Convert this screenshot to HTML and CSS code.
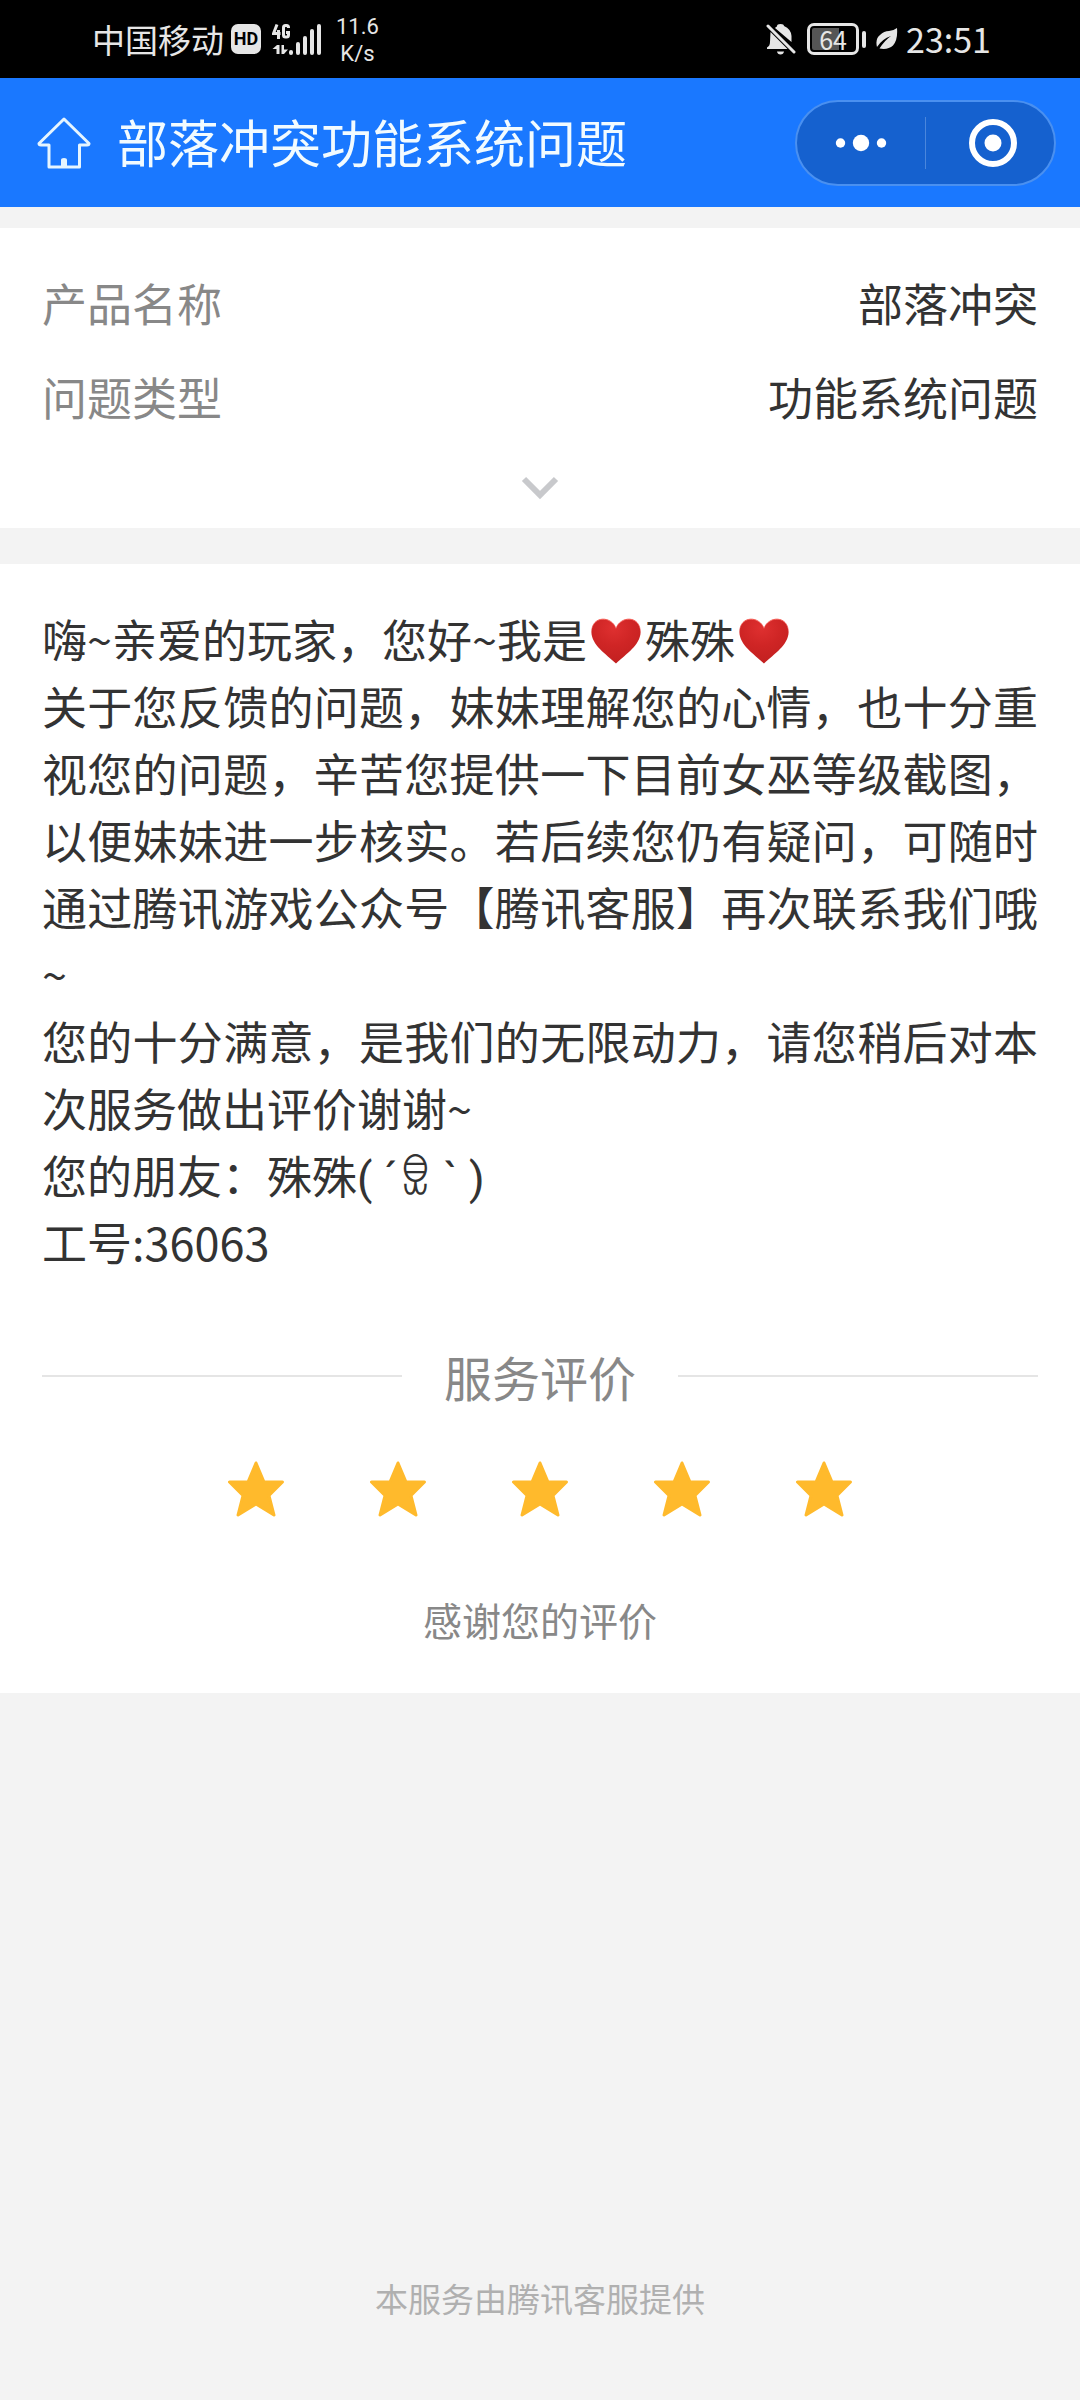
FILE: index.html
```html
<!DOCTYPE html>
<html lang="zh-CN">
<head>
<meta charset="utf-8">
<meta name="viewport" content="width=device-width, initial-scale=1">
<title>部落冲突功能系统问题</title>
<link rel="stylesheet" href="styles.css">
</head>
<body>
<div class="status">
  <div class="status-group">
    <span class="carrier">中国移动</span>
    <span class="hd">HD</span>
    <svg class="signal" width="50" height="32" viewBox="0 0 50 32" aria-hidden="true">
      <g fill="none" stroke="#e6e6e6" stroke-width="3">
        <path d="M5 1.500L1.500 10.500H8.500M6.500 7V16"/>
        <path d="M16.500 5V4.500Q16.500 2.500 14.500 2.500H13.500Q11.500 2.500 11.500 4.500V12Q11.500 14 13.500 14H14.500Q16.500 14 16.500 12V9.500H14"/>
      </g>
      <path fill="#e6e6e6" d="M4.500 31V26H0.500L5 22H7.500V31ZM9.500 22H12V26.500H16L12 31H9.500Z"/>
      <g fill="#e6e6e6">
        <rect x="17" y="27" width="4" height="5" rx="2"/><rect x="24" y="19" width="4" height="13" rx="2"/><rect x="31" y="13" width="4" height="19" rx="2"/><rect x="38" y="6" width="4" height="26" rx="2"/><rect x="45" y="1" width="4" height="31" rx="2"/>
      </g>
    </svg>
    <span class="speed">11.6<br>K/s</span>
  </div>
  <div class="status-group">
    <svg width="30" height="32" viewBox="0 0 30 32" aria-hidden="true">
      <path fill="#e6e6e6" d="M10 4Q11 4 11 3Q11 1 14.500 1T18 3Q25 6 25.500 13V19L9 5ZM4.500 9L21.500 26H1V24.500Q4 23 4 19ZM11 28.500H18Q17.500 31.500 14.500 31.500T11 28.500Z"/>
      <path fill="none" stroke="#e6e6e6" stroke-width="3" stroke-linecap="round" d="M2 3L28 29"/>
    </svg>
    <span class="battery"><span class="battery-level">64</span></span>
    <svg class="leaf" width="22" height="22" viewBox="0 0 22 22" aria-hidden="true">
      <path fill="#e6e6e6" d="M21 0Q22 12 17 17.500Q12 22 3.500 20.500Q9 12 15 8Q6 11 1 19Q-1 11 4 7Q8 3 13 3Q18 2.500 21 0Z"/>
    </svg>
    <time class="clock">23:51</time>
  </div>
</div>

<header class="header">
  <a class="home" href="#" aria-label="首页">
    <svg width="54" height="52" viewBox="0 0 54 52" aria-hidden="true">
      <path fill="none" stroke="#e6f5ff" stroke-width="3" stroke-linejoin="round" d="M27 2L52 26.500Q52 28 50 28H42.500V50H12V28H4Q2 28 2 26.500Z"/>
      <path fill="#e6f5ff" d="M24 51V43Q24 41 27 41T30 43V51Z"/>
    </svg>
  </a>
  <h1 class="title">部落冲突功能系统问题</h1>
  <div class="capsule">
    <button class="capsule-button" type="button" aria-label="更多">
      <svg width="52" height="18" viewBox="0 0 52 18" fill="#fff" aria-hidden="true"><circle cx="5.500" cy="9" r="4.700"/><circle cx="26" cy="9" r="8.200"/><circle cx="46.500" cy="9" r="4.700"/></svg>
    </button>
    <button class="capsule-button capsule-close" type="button" aria-label="关闭">
      <svg width="48" height="48" viewBox="0 0 48 48" aria-hidden="true"><circle cx="24" cy="24" r="21" fill="none" stroke="#fff" stroke-width="6"/><circle cx="24" cy="24" r="8.500" fill="#fff"/></svg>
    </button>
  </div>
</header>

<main class="content">
  <section class="card summary">
    <dl class="fields">
      <div class="field"><dt>产品名称</dt><dd>部落冲突</dd></div>
      <div class="field"><dt>问题类型</dt><dd>功能系统问题</dd></div>
    </dl>
    <button class="expand" type="button" aria-label="展开">
      <svg width="38" height="24" viewBox="0 0 38 24" aria-hidden="true"><path fill="none" stroke="#c8c9cc" stroke-width="6" d="M3 3L19 19L35 3"/></svg>
    </button>
  </section>

  <section class="card reply">
    <svg class="defs" width="0" height="0" aria-hidden="true">
      <defs>
        <radialGradient id="heart-fill" cx="0.450" cy="0.200" r="0.800"><stop offset="0" stop-color="#df3030"/><stop offset="0.500" stop-color="#cf2525"/><stop offset="1" stop-color="#c22020"/></radialGradient>
        <linearGradient id="heart-rim" x1="0" y1="0" x2="0" y2="1"><stop offset="0" stop-color="#f5524a"/><stop offset="0.400" stop-color="#e03030" stop-opacity="0"/></linearGradient>
        <symbol id="heart" viewBox="0 0 50 46">
          <path fill="url(#heart-fill)" stroke="url(#heart-rim)" d="M25 10.500C29 -2 49 -3 49.500 14C49.500 27 35 36 25 45.500C15 36 0.500 27 0.500 14C1 -3 21 -2 25 10.500Z"/>
        </symbol>
        <symbol id="star" viewBox="0 0 56 56">
          <path fill="#ffba2c" stroke="#ffba2c" stroke-width="3" stroke-linejoin="round" d="M28 2L36 21H54.500L41 34.500L46 54L28 43L10 54L15 34.500L1.500 21H20Z"/>
        </symbol>
      </defs>
    </svg>
    <div class="message">
      <p>嗨~亲爱的玩家，您好~我是<svg class="heart" role="img" aria-label="红心"><use href="#heart"/></svg>殊殊<svg class="heart" role="img" aria-label="红心"><use href="#heart"/></svg></p>
      <p>关于您反馈的问题，妹妹理解您的心情，也十分重视您的问题，辛苦您提供一下目前女巫等级截图，以便妹妹进一步核实。若后续您仍有疑问，可随时通过腾讯游戏公众号【腾讯客服】再次联系我们哦~</p>
      <p>您的十分满意，是我们的无限动力，请您稍后对本次服务做出评价谢谢~</p>
      <p>您的朋友：殊殊<span class="kaomoji">( ´ꁖ ` )</span></p>
      <p>工号:36063</p>
    </div>
    <h2 class="rating-title">服务评价</h2>
    <div class="stars" role="img" aria-label="五星">
      <svg class="star"><use href="#star"/></svg>
      <svg class="star"><use href="#star"/></svg>
      <svg class="star"><use href="#star"/></svg>
      <svg class="star"><use href="#star"/></svg>
      <svg class="star"><use href="#star"/></svg>
    </div>
    <p class="thanks">感谢您的评价</p>
  </section>
</main>

<footer class="footer">本服务由腾讯客服提供</footer>
</body>
</html>
```
FILE: styles.css
```css
* {
  box-sizing: border-box;
}

body,
h1,
h2,
p,
dl,
dd {
  margin: 0;
  font-weight: 400;
}

body {
  display: flex;
  flex-direction: column;
  min-height: 100vh;
  background: #f3f3f3;
  color: #333;
  font-family: "Noto Sans CJK SC", sans-serif;
  font-size: 45px;
  line-height: 67px;
  text-spacing-trim: space-all;
}

svg {
  display: block;
  flex: none;
}

button {
  display: flex;
  align-items: center;
  justify-content: center;
  padding: 0;
  border: 0;
  background: none;
}

.status {
  display: flex;
  justify-content: space-between;
  height: 78px;
  padding: 0 89px 0 92px;
  background: #000;
  color: #e6e6e6;
}

.status-group {
  display: flex;
  align-items: center;
}

.carrier {
  font-size: 33px;
  line-height: 72px;
}

.hd {
  width: 30px;
  margin: 0 11px 0 7px;
  border-radius: 7px;
  background: #e6e6e6;
  color: #000;
  font: 700 18px/30px Roboto, sans-serif;
  text-align: center;
}

.speed {
  padding-top: 2px;
  margin-left: 14px;
  font: 22px/27px Roboto, sans-serif;
  text-align: center;
}

.battery {
  display: flex;
  align-items: center;
  margin-left: 11px;
}

.battery::after {
  width: 4px;
  height: 17px;
  margin-left: 3px;
  border-radius: 2px;
  background: #e6e6e6;
  content: "";
}

.battery-level {
  width: 52px;
  height: 32px;
  padding: 2px;
  border: 3px solid #e6e6e6;
  border-radius: 7px;
  background: linear-gradient(90deg, #555 64%, #000 64%) content-box;
  font-size: 25px;
  line-height: 22px;
  text-align: center;
}

.leaf {
  margin: 0 8px 0 10px;
}

.clock {
  font-size: 34px;
  line-height: 72px;
}

.header {
  display: flex;
  align-items: center;
  height: 129px;
  padding: 0 24px 0 37px;
  background: #1a78ff;
}

.title {
  flex: 1;
  padding-bottom: 3px;
  margin-left: 26px;
  color: #f2fbff;
  font-size: 51px;
  line-height: 72px;
}

.capsule {
  display: flex;
  width: 261px;
  height: 86px;
  border: 2px solid #4a90f0;
  border-radius: 43px;
  background: linear-gradient(#4a86dc, #4a86dc) center / 1px 52px no-repeat #1561cf;
}

.capsule-button {
  width: 50%;
}

.capsule-close {
  padding-left: 6px;
}

.card {
  padding: 0 42px;
  background: #fff;
}

.summary {
  margin-top: 21px;
  padding-top: 28px;
}

.field {
  display: flex;
  justify-content: space-between;
  line-height: 94px;
}

.field dt {
  color: #888;
}

.expand {
  width: 100%;
  height: 84px;
  padding-top: 4px;
}

.reply {
  margin-top: 36px;
  padding-top: 41px;
  padding-bottom: 46px;
}

.defs {
  position: absolute;
}

.message {
  text-align: justify;
}

.heart {
  display: inline-block;
  width: 50px;
  height: 46px;
  margin: 0 4px;
  vertical-align: -6px;
}

.kaomoji {
  font-family: Roboto, "Noto Sans CJK SC", sans-serif;
  line-height: 1;
}

.rating-title {
  display: flex;
  align-items: center;
  gap: 42px;
  margin-top: 66px;
  color: #888;
  font-size: 48px;
  line-height: 70px;
}

.rating-title::before,
.rating-title::after {
  flex: 1;
  height: 2px;
  background: #e5e5e5;
  content: "";
}

.stars {
  display: flex;
  justify-content: center;
  gap: 86px;
  margin-top: 50px;
}

.star {
  width: 56px;
  height: 56px;
}

.thanks {
  margin-top: 74px;
  color: #888;
  font-size: 39px;
  line-height: 56px;
  text-align: center;
}

.footer {
  margin-top: auto;
  padding-bottom: 78px;
  color: #b0b0b0;
  font-size: 33px;
  line-height: 48px;
  text-align: center;
}
```
